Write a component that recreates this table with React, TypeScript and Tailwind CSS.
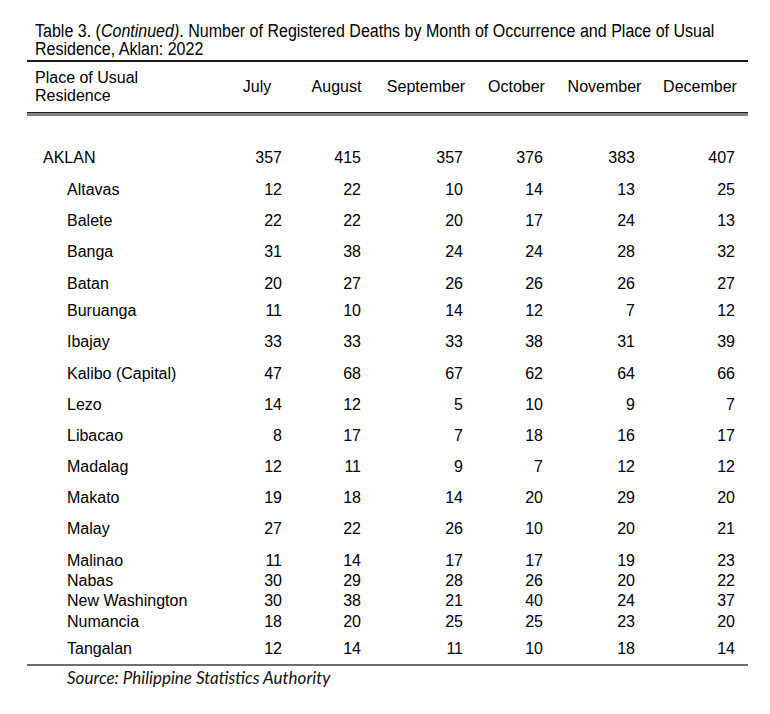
import React from "react";

type Row = { name: string; vals: number[]; h: number; total?: boolean };

const rows: Row[] = [
  { name: "AKLAN", vals: [357, 415, 357, 376, 383, 407], h: 32, total: true },
  { name: "Altavas", vals: [12, 22, 10, 14, 13, 25], h: 31 },
  { name: "Balete", vals: [22, 22, 20, 17, 24, 13], h: 31 },
  { name: "Banga", vals: [31, 38, 24, 24, 28, 32], h: 32 },
  { name: "Batan", vals: [20, 27, 26, 26, 26, 27], h: 27 },
  { name: "Buruanga", vals: [11, 10, 14, 12, 7, 12], h: 31 },
  { name: "Ibajay", vals: [33, 33, 33, 38, 31, 39], h: 32 },
  { name: "Kalibo (Capital)", vals: [47, 68, 67, 62, 64, 66], h: 31 },
  { name: "Lezo", vals: [14, 12, 5, 10, 9, 7], h: 31 },
  { name: "Libacao", vals: [8, 17, 7, 18, 16, 17], h: 31 },
  { name: "Madalag", vals: [12, 11, 9, 7, 12, 12], h: 31 },
  { name: "Makato", vals: [19, 18, 14, 20, 29, 20], h: 31 },
  { name: "Malay", vals: [27, 22, 26, 10, 20, 21], h: 32 },
  { name: "Malinao", vals: [11, 14, 17, 17, 19, 23], h: 20 },
  { name: "Nabas", vals: [30, 29, 28, 26, 20, 22], h: 20 },
  { name: "New Washington", vals: [30, 38, 21, 40, 24, 37], h: 21 },
  { name: "Numancia", vals: [18, 20, 25, 25, 23, 20], h: 27 },
  { name: "Tangalan", vals: [12, 14, 11, 10, 18, 14], h: 24 },
];

const months = ["July", "August", "September", "October", "November", "December"];

// column widths and right padding of the numbers, measured off the printed table
const colW = ["w-[80px]", "w-[79px]", "w-[100px]", "w-[81px]", "w-[95px]", "w-[96px]"];
const numPad = ["pr-[15px]", "pr-[15px]", "pr-[13px]", "pr-[14px]", "pr-[17px]", "pr-[13px]"];

export default function App() {
  return (
    <div className="w-[770px] h-[714px] overflow-hidden bg-white text-black font-['Liberation_Sans',Arial,sans-serif] text-[16px] leading-[18px]">
      <div className="pl-[27px] w-[748px]">
        {/* title, set in a condensed face in the original */}
        <div className="pt-[22px] pb-[2px] pl-[8px] text-[18px] leading-[18px]">
          <div className="w-max origin-left scale-x-[0.89] whitespace-nowrap">
            Table 3. (<span className="italic">Continued)</span>. Number of Registered Deaths by Month of Occurrence and Place of Usual
          </div>
          <div className="w-max origin-left scale-x-[0.89] whitespace-nowrap">Residence, Aklan: 2022</div>
        </div>

        <div className="h-[2px] bg-[#1c1c1c]" />

        {/* header */}
        <div className="flex h-[50px] items-center">
          <div className="w-[190px] pl-[8px]">
            <div>Place of Usual</div>
            <div>Residence</div>
          </div>
          {months.map((m, i) => (
            <div key={m} className={`${colW[i]} text-center`}>
              {m}
            </div>
          ))}
        </div>
        <div className="h-px bg-[#222]" />
        <div className="h-[3px] bg-[#808080]" />

        <div className="h-[33px]" />

        {rows.map((r) => (
          <div key={r.name} className="flex" style={{ height: r.h }}>
            <div className={`w-[190px] ${r.total ? "pl-[16px]" : "pl-[40px]"}`}>{r.name}</div>
            {r.vals.map((v, i) => (
              <div key={i} className={`${colW[i]} ${numPad[i]} text-right`}>
                {v}
              </div>
            ))}
          </div>
        ))}

        <div className="h-[2px] bg-[#6e6e6e]" />
      </div>

      <div className="pl-[67px] pt-[2px] font-['Lato',sans-serif] italic text-[17px] leading-[20px] text-[#111]">
        Source: Philippine Statistics Authority
      </div>
    </div>
  );
}
